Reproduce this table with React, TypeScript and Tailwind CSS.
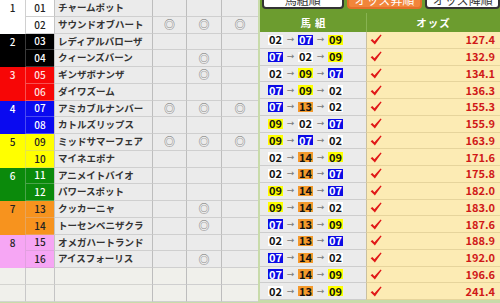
import React from "react";

type Horse = { no: string; name: string; marks: number[] };
type Waku = { n: number; bg: string; text: string; line: string; horses: Horse[] };

const wakus: Waku[] = [
    {
        n: 1,
        bg: "bg-white",
        text: "text-[#222]",
        line: "border-[#d0d0d0]",
        horses: [
            { no: "01", name: "チャームポット", marks: [0, 0, 0] },
            { no: "02", name: "サウンドオブハート", marks: [1, 1, 1] },
        ],
    },
    {
        n: 2,
        bg: "bg-black",
        text: "text-white",
        line: "border-[#3a3a3a]",
        horses: [
            { no: "03", name: "レディアルバローザ", marks: [0, 0, 0] },
            { no: "04", name: "クィーンズバーン", marks: [0, 1, 0] },
        ],
    },
    {
        n: 3,
        bg: "bg-[#f70606]",
        text: "text-[#ffe4e4]",
        line: "border-[#f85050]",
        horses: [
            { no: "05", name: "ギンザボナンザ", marks: [0, 1, 0] },
            { no: "06", name: "ダイワズーム", marks: [0, 0, 0] },
        ],
    },
    {
        n: 4,
        bg: "bg-[#0a0af0]",
        text: "text-white",
        line: "border-[#4a4af2]",
        horses: [
            { no: "07", name: "アミカブルナンバー", marks: [1, 1, 1] },
            { no: "08", name: "カトルズリップス", marks: [0, 0, 0] },
        ],
    },
    {
        n: 5,
        bg: "bg-[#ffff00]",
        text: "text-[#222]",
        line: "border-[#e6e64a]",
        horses: [
            { no: "09", name: "ミッドサマーフェア", marks: [1, 1, 1] },
            { no: "10", name: "マイネエポナ", marks: [0, 0, 0] },
        ],
    },
    {
        n: 6,
        bg: "bg-[#0b8a0b]",
        text: "text-white",
        line: "border-[#4aa44a]",
        horses: [
            { no: "11", name: "アニメイトバイオ", marks: [0, 0, 0] },
            { no: "12", name: "パワースポット", marks: [0, 0, 0] },
        ],
    },
    {
        n: 7,
        bg: "bg-[#f7931e]",
        text: "text-[#222]",
        line: "border-[#e8a45a]",
        horses: [
            { no: "13", name: "クッカーニャ", marks: [0, 1, 0] },
            { no: "14", name: "トーセンベニザクラ", marks: [0, 1, 0] },
        ],
    },
    {
        n: 8,
        bg: "bg-[#f6a6f4]",
        text: "text-[#222]",
        line: "border-[#e2a0e0]",
        horses: [
            { no: "15", name: "オメガハートランド", marks: [0, 0, 0] },
            { no: "16", name: "アイスフォーリス", marks: [0, 1, 0] },
        ],
    },
];

const combos: [string, string, string, string][] = [
    ["02", "07", "09", "127.4"],
    ["07", "02", "09", "132.9"],
    ["02", "09", "07", "134.1"],
    ["07", "09", "02", "136.3"],
    ["07", "13", "02", "155.3"],
    ["09", "02", "07", "155.9"],
    ["09", "07", "02", "163.9"],
    ["02", "14", "09", "171.6"],
    ["02", "14", "07", "175.8"],
    ["09", "14", "07", "182.0"],
    ["09", "14", "02", "183.0"],
    ["07", "13", "09", "187.6"],
    ["02", "13", "07", "188.9"],
    ["07", "14", "02", "192.0"],
    ["07", "14", "09", "196.6"],
    ["02", "13", "09", "241.4"],
];

const boxColor: Record<string, string> = {
    "02": "bg-white text-[#111]",
    "07": "bg-[#0a0ae6] text-white",
    "09": "bg-[#ffff00] text-[#111]",
    "13": "bg-[#f49a2c] text-[#111]",
    "14": "bg-[#f49a2c] text-[#111]",
};

const markW = ["w-[34px]", "w-[35px]", "w-[37px]"];

function Marks({ marks, empty }: { marks: number[]; empty?: boolean }) {
    return (
        <>
            {marks.map((m, i) => (
                <div
                    key={i}
                    className={`${markW[i]} h-full border-l border-b border-l-[#bdbdbd] border-b-[#cfcfcf] ${
                        empty ? "bg-[#f0f0eb]" : "bg-[#ebebeb]"
                    } flex items-center justify-center text-[11px] leading-none text-[#6c6c6c]`}
                >
                    {m ? "◎" : ""}
                </div>
            ))}
        </>
    );
}

function NumBox({ no }: { no: string }) {
    return (
        <div
            className={`w-[15px] h-[10px] flex items-center justify-center text-[11px] leading-none font-semibold ${boxColor[no]}`}
        >
            {no}
        </div>
    );
}

function Arrow() {
    return (
        <div className="w-[7px] flex items-center justify-center text-[9px] leading-none text-[#777] font-['DejaVu_Sans',sans-serif]">
            →
        </div>
    );
}

function Check() {
    return (
        <svg width="12" height="11" viewBox="0 0 12 11">
            <path d="M0.6 6.2 L2.4 4.9 L4.4 7.3 L10.6 0.4 L11.6 1.3 L4.9 10.4 Z" fill="#e01818" />
        </svg>
    );
}

export default function App() {
    return (
        <div className="w-[500px] h-[303px] overflow-hidden flex bg-[#c8dbaa] font-['Noto_Sans_CJK_JP','Noto_Sans',sans-serif]">
            {/* left: horse list */}
            <div className="w-[258px] flex flex-col shrink-0">
                {wakus.map((w) => (
                    <div key={w.n} className="flex">
                        <div className={`w-[26px] h-[33.5px] ${w.bg} ${w.text} border-r ${w.line}`}>
                            <div className="h-[16.75px] flex items-center justify-center text-[10px] font-medium leading-none">
                                {w.n}
                            </div>
                        </div>
                        <div className="flex flex-col">
                            {w.horses.map((h) => (
                                <div key={h.no} className="flex h-[16.75px]">
                                    <div
                                        className={`w-[28px] h-full ${w.bg} ${w.text} border-b ${w.line} flex items-center justify-center text-[10px] font-medium leading-none`}
                                    >
                                        {h.no}
                                    </div>
                                    <div className="w-[98px] h-full bg-[#ebebeb] border-l border-b border-l-[#c4c4c4] border-b-[#cfcfcf] pl-[3px] flex items-center overflow-hidden whitespace-nowrap text-[9.5px] font-bold text-[#333] leading-none">
                                        {h.name}
                                    </div>
                                    <Marks marks={h.marks} />
                                </div>
                            ))}
                        </div>
                    </div>
                ))}
                {[0, 1].map((i) => (
                    <div key={i} className="flex h-[16.75px]">
                        <div className="w-[26px] h-full bg-[#f0f0eb] border-r border-b border-r-[#c8c8c8] border-b-[#d4d4d0]" />
                        <div className="w-[28px] h-full bg-[#f0f0eb] border-b border-[#d4d4d0]" />
                        <div className="w-[98px] h-full bg-[#f0f0eb] border-l border-b border-l-[#c4c4c4] border-b-[#d4d4d0]" />
                        <Marks marks={[0, 0, 0]} empty />
                    </div>
                ))}
            </div>

            {/* right: combinations */}
            <div className="w-[240px] ml-[2px] flex flex-col shrink-0">
                <div className="h-[32px] bg-[#6c9c2f] flex flex-col">
                    <div className="h-[10px] overflow-hidden flex">
                        <div className="ml-[2px] w-[83px] h-[22px] mt-[-13px] bg-white border-2 border-[#333] rounded-b-[4px] flex items-end justify-center pb-[1px] text-[12px] leading-none text-[#333]">
                            馬組順
                        </div>
                        <div className="ml-[3px] w-[77px] h-[22px] mt-[-13px] bg-[#f2853a] border-2 border-[#e5702a] rounded-b-[4px] flex items-end justify-center pb-[1px] text-[12px] leading-none text-white">
                            オッズ昇順
                        </div>
                        <div className="ml-[3px] w-[76px] h-[22px] mt-[-13px] bg-white border-2 border-[#333] rounded-b-[4px] flex items-end justify-center pb-[1px] text-[12px] leading-none text-[#333]">
                            オッズ降順
                        </div>
                    </div>
                    <div className="flex-1 flex pt-[3px]">
                        <div className="w-[106px] flex items-center justify-center text-[10.5px] font-bold text-white tracking-[4px] pl-[4px]">
                            馬組
                        </div>
                        <div className="flex-1 border-l border-[#88b352] flex items-center justify-center text-[10.5px] font-bold text-white tracking-[1px]">
                            オッズ
                        </div>
                    </div>
                </div>
                {combos.map(([a, b, c, odds], i) => (
                    <div key={i} className="flex h-[16.75px]">
                        <div className="w-[106px] h-full bg-[#ebebeb] border-b border-[#cdcdcd] flex items-center pl-[8px] gap-[4px]">
                            <NumBox no={a} />
                            <Arrow />
                            <NumBox no={b} />
                            <Arrow />
                            <NumBox no={c} />
                        </div>
                        <div className="flex-1 h-full bg-[#fcebb4] border-l border-b border-l-[#c9c0a0] border-b-[#e6d49c] flex items-center pl-[3px] pr-[5px]">
                            <Check />
                            <div className="flex-1 text-right text-[11px] font-bold text-[#d01818] leading-none">
                                {odds}
                            </div>
                        </div>
                    </div>
                ))}
            </div>
        </div>
    );
}
